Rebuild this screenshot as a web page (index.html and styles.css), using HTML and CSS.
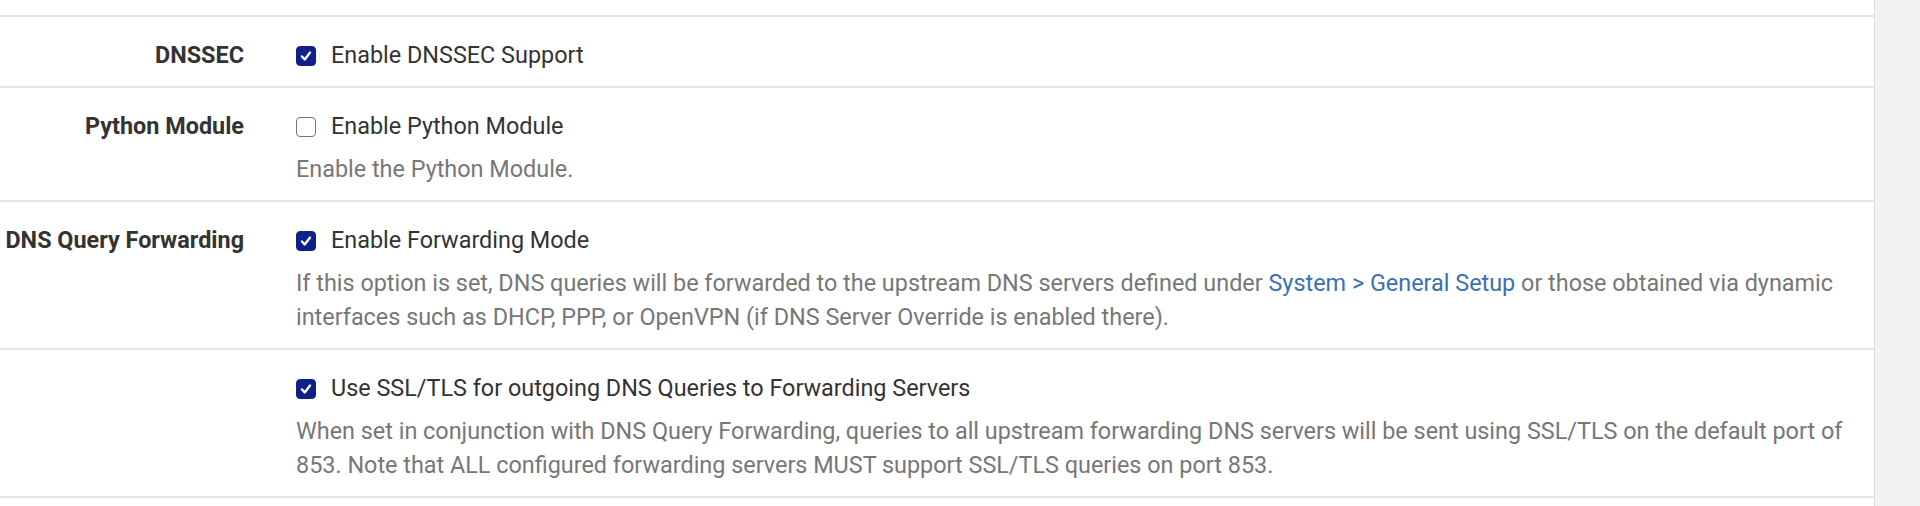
FILE: index.html
```html
<!DOCTYPE html>
<html>
<head>
<meta charset="utf-8">
<link rel="stylesheet" href="styles.css">
</head>
<body>
<div class="page">
  <div class="panel">
    <div class="tail"><div class="help tail-text">Select the port used for responses to queries (applies to this page) on every listening interface</div></div>

    <div class="row">
      <div class="label">DNSSEC</div>
      <div class="ctrl">
        <div class="check"><span class="box on"><svg viewBox="0 0 20 20"><path d="M5.5 10.5 L8.6 13.8 L14.5 6.2"/></svg></span>Enable DNSSEC Support</div>
      </div>
    </div>

    <div class="row">
      <div class="label">Python Module</div>
      <div class="ctrl">
        <div class="check"><span class="box"></span>Enable Python Module</div>
        <div class="help">Enable the Python Module.</div>
      </div>
    </div>

    <div class="row">
      <div class="label">DNS Query Forwarding</div>
      <div class="ctrl">
        <div class="check"><span class="box on"><svg viewBox="0 0 20 20"><path d="M5.5 10.5 L8.6 13.8 L14.5 6.2"/></svg></span>Enable Forwarding Mode</div>
        <div class="help">If this option is set, DNS queries will be forwarded to the upstream DNS servers defined under <a class="link" href="#">System &gt; General Setup</a> or those obtained via dynamic interfaces such as DHCP, PPP, or OpenVPN (if DNS Server Override is enabled there).</div>
      </div>
    </div>

    <div class="row">
      <div class="label"></div>
      <div class="ctrl">
        <div class="check"><span class="box on"><svg viewBox="0 0 20 20"><path d="M5.5 10.5 L8.6 13.8 L14.5 6.2"/></svg></span>Use SSL/TLS for outgoing DNS Queries to Forwarding Servers</div>
        <div class="help">When set in conjunction with DNS Query Forwarding, queries to all upstream forwarding DNS servers will be sent using SSL/TLS on the default port of 853. Note that ALL configured forwarding servers MUST support SSL/TLS queries on port 853.</div>
      </div>
    </div>
    <div class="row end"></div>
  </div>
</div>
</body>
</html>
```

FILE: styles.css
```css
html, body {
  margin: 0;
  padding: 0;
}
body {
  background: #f2f2f2;
  font-family: Roboto, "Liberation Sans", Arial, sans-serif;
  font-size: 23.4px;
  color: #333333;
}
.page {
  display: flex;
  height: 506px;
  overflow: hidden;
}
.panel {
  width: 1874px;
  background: #ffffff;
  border-right: 1px solid #dcdcdc;
}
.tail {
  height: 15px;
  overflow: hidden;
  padding-left: 296px;
}
.tail-text {
  margin-top: -27px;
  color: #777777;
}
.row {
  display: grid;
  grid-template-columns: 244px 1fr;
  column-gap: 52px;
  border-top: 2px solid #e6e6e6;
  padding: 12px 0 14px 0;
}
.row.end {
  padding: 0;
  height: 20px;
}
.label {
  padding-top: 10px;
  line-height: 33px;
  font-weight: 700;
  text-align: right;
  white-space: nowrap;
  color: #333333;
}
.ctrl {
  padding-right: 14px;
  min-width: 0;
}
.check {
  margin-top: 10px;
  line-height: 33px;
  display: flex;
  align-items: center;
  gap: 15px;
  color: #333333;
}
.box {
  width: 20px;
  height: 20px;
  box-sizing: border-box;
  border: 1.5px solid #767676;
  border-radius: 4px;
  background: #ffffff;
  flex: none;
  display: flex;
}
.box.on {
  background: #0f2189;
  border-color: #0f2189;
}
.box svg {
  width: 100%;
  height: 100%;
}
.box svg path {
  fill: none;
  stroke: #ffffff;
  stroke-width: 2.6;
  stroke-linecap: round;
  stroke-linejoin: round;
}
.help {
  margin-top: 9px;
  line-height: 34px;
  color: #777777;
}
.link {
  color: #3a71b5;
  text-decoration: none;
}
```
